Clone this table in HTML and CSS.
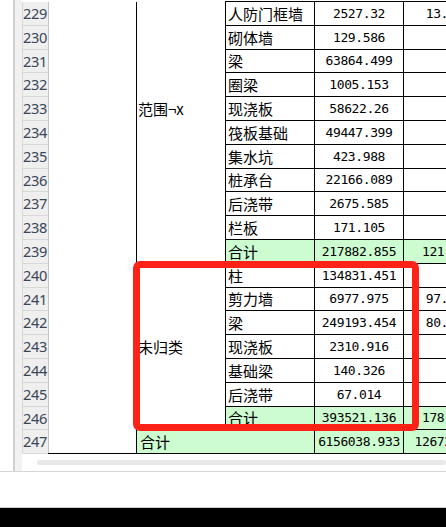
FILE: index.html
```html
<!DOCTYPE html>
<html lang="zh-CN">
<head>
<meta charset="utf-8">
<title>工程量汇总表</title>
<link rel="stylesheet" href="styles.css">
</head>
<body>
<div class="screen">
  <div class="workspace">
    <div class="gutter"></div>
    <div class="sheet">
      <div class="grid-clip">
        <table class="grid">
          <colgroup>
            <col class="c-rh"><col class="c-a"><col class="c-b"><col class="c-c"><col class="c-d"><col class="c-e">
          </colgroup>
          <tbody>
            <tr><th>229</th><td class="blank" rowspan="19"></td><td class="group group-top" rowspan="11">范围¬x</td><td class="name">人防门框墙</td><td class="num">2527.32</td><td class="num">13.562</td></tr>
            <tr><th>230</th><td class="name">砌体墙</td><td class="num">129.586</td><td class="num"></td></tr>
            <tr><th>231</th><td class="name">梁</td><td class="num">63864.499</td><td class="num"></td></tr>
            <tr><th>232</th><td class="name">圈梁</td><td class="num">1005.153</td><td class="num"></td></tr>
            <tr><th>233</th><td class="name">现浇板</td><td class="num">58622.26</td><td class="num"></td></tr>
            <tr><th>234</th><td class="name">筏板基础</td><td class="num">49447.399</td><td class="num"></td></tr>
            <tr><th>235</th><td class="name">集水坑</td><td class="num">423.988</td><td class="num"></td></tr>
            <tr><th>236</th><td class="name">桩承台</td><td class="num">22166.089</td><td class="num"></td></tr>
            <tr><th>237</th><td class="name">后浇带</td><td class="num">2675.585</td><td class="num"></td></tr>
            <tr><th>238</th><td class="name">栏板</td><td class="num">171.105</td><td class="num"></td></tr>
            <tr class="total"><th>239</th><td class="name">合计</td><td class="num">217882.855</td><td class="num">121.436</td></tr>
            <tr><th>240</th><td class="group" rowspan="7">未归类</td><td class="name">柱</td><td class="num">134831.451</td><td class="num"></td></tr>
            <tr><th>241</th><td class="name">剪力墙</td><td class="num">6977.975</td><td class="num">97.652</td></tr>
            <tr><th>242</th><td class="name">梁</td><td class="num">249193.454</td><td class="num">80.917</td></tr>
            <tr><th>243</th><td class="name">现浇板</td><td class="num">2310.916</td><td class="num"></td></tr>
            <tr><th>244</th><td class="name">基础梁</td><td class="num">140.326</td><td class="num"></td></tr>
            <tr><th>245</th><td class="name">后浇带</td><td class="num">67.014</td><td class="num"></td></tr>
            <tr class="total"><th>246</th><td class="name">合计</td><td class="num">393521.136</td><td class="num">178.569</td></tr>
            <tr class="total grand"><th>247</th><td class="name wide" colspan="2">合计</td><td class="num">6156038.933</td><td class="num">12672.118</td></tr>
          </tbody>
        </table>
      </div>
      <div class="hscroll"><div class="track"></div></div>
    </div>
  </div>
  <div class="blank-band"></div>
  <div class="taskbar"></div>
  <div class="highlight"></div>
</div>
</body>
</html>
```

FILE: styles.css
```css
html, body {
  margin: 0;
  padding: 0;
  background: #ffffff;
}

.screen {
  position: relative;
  width: 446px;
  height: 527px;
  overflow: hidden;
  display: flex;
  flex-direction: column;
  background: #ffffff;
}

.workspace {
  display: flex;
  height: 471px;
  border-bottom: 1px solid #d6d6d6;
  flex: none;
}

.gutter {
  width: 13px;
  flex: none;
  background: #ffffff;
  border-right: 2px solid #d0d0d0;
}

.sheet {
  flex: 1;
  min-width: 0;
  display: flex;
  flex-direction: column;
  padding-left: 7px;
  background: linear-gradient(to right, #f1f1f1 0, #f1f1f1 7px, #ffffff 7px);
}

.grid-clip {
  height: 454px;
  overflow: hidden;
  flex: none;
  padding-top: 1px;
  box-sizing: border-box;
}

.grid {
  border-collapse: collapse;
  table-layout: fixed;
  width: 470px;
  font-family: "Noto Sans CJK SC", "Noto Sans", sans-serif;
  font-size: 15px;
  color: #000;
}

.c-rh { width: 26px; }
.c-a { width: 88px; }
.c-b { width: 89px; }
.c-c { width: 89px; }
.c-d { width: 89px; }
.c-e { width: 89px; }

.grid tr {
  height: 23.8px;
}

.grid th {
  padding: 0;
  background: #efefef;
  border-left: 1px solid #d8d8d8;
  border-bottom: 1px solid #d8d8d8;
  border-right: 1px solid #c4c4c4;
  font-family: "Noto Sans", "DejaVu Sans", sans-serif;
  font-weight: 400;
  font-size: 14.6px;
  letter-spacing: -0.3px;
  color: #3b4657;
  text-align: left;
  line-height: 1;
  white-space: nowrap;
  overflow: hidden;
}

.grid td {
  padding: 0;
  border: 1px solid #000;
  line-height: 1;
  white-space: nowrap;
  overflow: hidden;
  vertical-align: middle;
}

.grid td.blank {
  background: #ffffff;
  border-top: none;
  border-left: 1px solid #c4c4c4;
}

.grid td.group {
  padding-left: 1px;
  background: #ffffff;
}

.grid td.group-top {
  border-top: none;
  padding-bottom: 47px;
}

.grid td.name {
  padding-left: 2px;
}

.grid td.wide {
  padding-left: 3px;
}

.grid td.num {
  text-align: center;
  font-family: "DejaVu Sans Mono", "Liberation Mono", monospace;
  font-size: 13px;
  letter-spacing: -0.4px;
}

.grid tr.total td.name,
.grid tr.total td.num {
  background: #ccfccf;
}

.hscroll {
  flex: 1;
  display: flex;
  align-items: center;
  padding-left: 15px;
}

.track {
  flex: 1;
  height: 5px;
  border-radius: 3px;
  background: #e9e9e9;
}

.blank-band {
  height: 35px;
  flex: none;
  background: #ffffff;
  border-bottom: 1px solid #cfcfcf;
}

.taskbar {
  flex: 1;
  background: #000000;
}

.highlight {
  position: absolute;
  left: 133px;
  top: 261px;
  width: 286px;
  height: 170px;
  box-sizing: border-box;
  border: 7px solid #ff2217;
  border-radius: 7px;
}
```
